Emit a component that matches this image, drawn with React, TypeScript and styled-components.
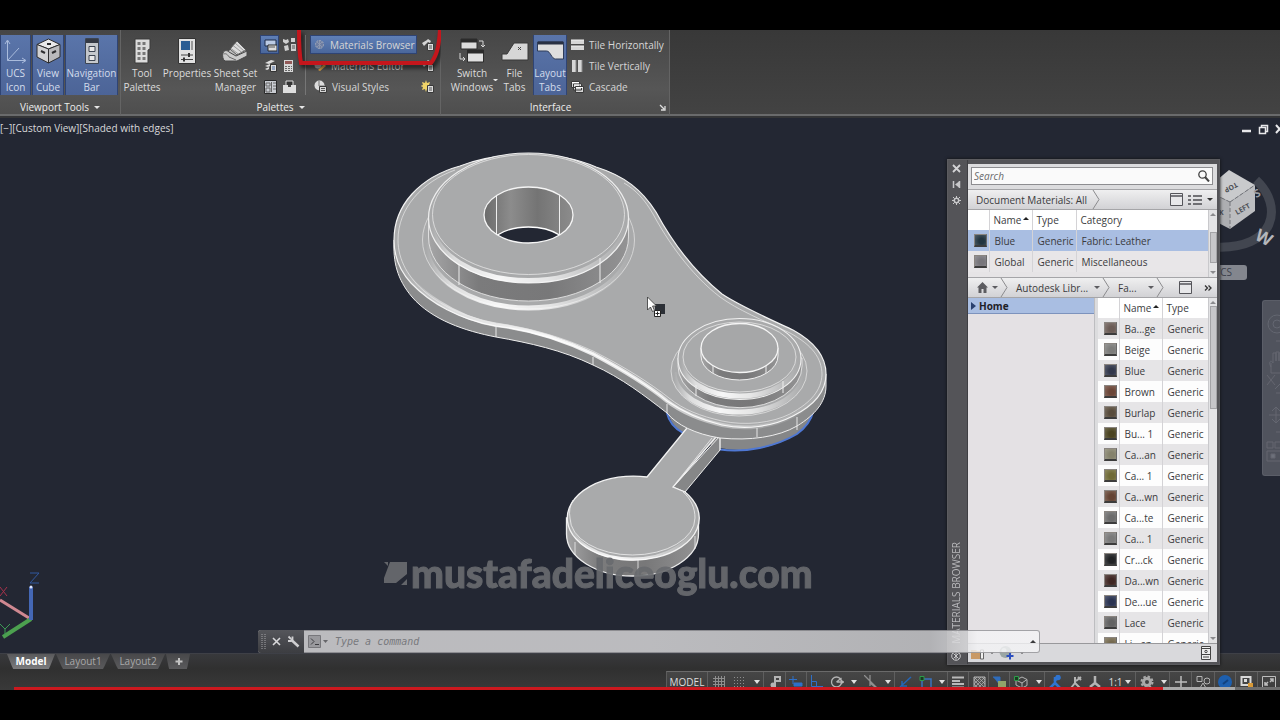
import React from "react";
import styled, { createGlobalStyle, css } from "styled-components";

const ui = `"Open Sans", "Noto Sans", sans-serif`;

const GlobalStyle = createGlobalStyle`
  * { box-sizing: border-box; }
  body { margin: 0; background: #000; font: 10px/14px ${ui}; color: #d6d6d6; }
  button, input { font: inherit; color: inherit; margin: 0; padding: 0; border: 0; background: none; }
  svg { display: block; flex: none; }
`;

/* ---------- shell ---------- */

const Page = styled.div`
  display: flex;
  flex-direction: column;
  min-height: 100vh;
  padding: 30px 0;
  background: #000;
  overflow: hidden;
`;

const Ribbon = styled.header`
  display: flex;
  height: 88px;
  position: relative;
  z-index: 3;
  background: linear-gradient(#383838, #434343);
  border-bottom: 2px solid #343537;
  box-shadow: inset 0 -2px 0 #6a6b6c;
`;

const Panel = styled.section<{ $w: number }>`
  display: flex;
  flex-direction: column;
  width: ${(p) => p.$w}px;
  flex: none;
  position: relative;
  background: linear-gradient(#464646, #565656 70%, #4e4e4e);
  border-right: 1px solid #646464;
  border-bottom: 2px solid #6a6b6c;
`;

const PanelBody = styled.div`
  display: flex;
  height: 67px;
  padding-top: 4px;
`;

const PanelTitle = styled.button<{ $launcher?: boolean }>`
  display: flex;
  flex: 1;
  align-items: center;
  justify-content: center;
  gap: 5px;
  position: relative;
  padding-top: 3px;
  padding-right: ${(p) => (p.$launcher ? 9 : 0)}px;
  color: #ececec;
`;

const Launcher = styled.span`
  position: absolute;
  right: 3px;
  top: 7px;
`;

const BigButton = styled.button<{ $w: number; $on?: boolean; $gap?: number }>`
  display: flex;
  flex-direction: column;
  align-items: center;
  flex: none;
  width: ${(p) => p.$w}px;
  height: 60px;
  margin: 1px 0 0 ${(p) => p.$gap ?? 0}px;
  white-space: nowrap;
  border: 1px solid transparent;
  border-width: 0 1px;
  color: #dcdcdc;
  position: relative;
  ${(p) => p.$on && css`
    background: linear-gradient(#5a75aa, #4c6497);
    border-color: #2f4474;
    color: #d3dcec;
  `}
`;

const BigIcon = styled.span`
  display: flex;
  align-items: center;
  justify-content: center;
  height: 31px;
`;

const DropMark = styled.span`
  position: absolute;
  right: -3px;
  bottom: 14px;
`;

const Stack = styled.div<{ $gap?: number }>`
  display: flex;
  flex-direction: column;
  margin-left: ${(p) => p.$gap ?? 0}px;
`;

const SmallButton = styled.button<{ $w?: number; $on?: boolean }>`
  display: flex;
  align-items: center;
  gap: 5px;
  height: 19px;
  margin: 1px 0;
  width: ${(p) => p.$w ?? 20}px;
  padding-left: 3px;
  white-space: nowrap;
  border: 1px solid transparent;
  ${(p) => p.$on && css`
    background: linear-gradient(#5f7fb6, #4a679c);
    border-color: #2f4474;
  `}
`;

const Rule = styled.span`
  width: 1px;
  height: 60px;
  margin: 1px 4px 0 6px;
  background: #767676;
`;

const Highlight = styled.svg`
  position: absolute;
  left: 173px;
  top: 0;
  filter: drop-shadow(2px 3px 2px rgba(0, 0, 0, 0.7));
  pointer-events: none;
`;

/* ---------- drawing area ---------- */

const Viewport = styled.main`
  flex: 1;
  position: relative;
  z-index: 2;
  min-height: 535px;
  background: #232733;
`;

const ViewLabel = styled.div`
  padding: 3px 0 0;
  color: #d8d8da;
`;

const Model = styled.svg`
  position: absolute;
  left: 380px;
  top: 32px;
`;

const Watermark = styled.div`
  position: absolute;
  left: 384px;
  bottom: 60px;
  display: flex;
  align-items: center;
  gap: 4px;
  font: 900 39px/40px Lato, sans-serif;
  -webkit-text-stroke: 1px #696b6f;
  color: #696b6f;
  opacity: 0.92;
`;

const Axis = styled.svg`
  position: absolute;
  left: 0;
  bottom: 8px;
`;

const WindowButtons = styled.div`
  position: absolute;
  right: -2px;
  top: 5px;
  display: flex;
  gap: 6px;
`;

const ViewCube = styled.svg`
  position: absolute;
  right: 0;
  top: 42px;
`;

const Wcs = styled.button`
  position: absolute;
  right: 33px;
  top: 147px;
  width: 42px;
  height: 15px;
  padding-left: 6px;
  text-align: left;
  line-height: 15px;
  border-radius: 3px;
  background: #83868e;
  color: #3d414c;
`;

const NavBar = styled.nav`
  position: absolute;
  right: 0;
  top: 182px;
  width: 18px;
  height: 176px;
  overflow: hidden;
  border-radius: 3px 0 0 3px;
  background: #50535d;
  border: 1px solid #5b5e68;
  border-right: 0;
`;

const CommandLine = styled.form`
  position: absolute;
  left: 258px;
  right: 240px;
  bottom: 0;
  height: 23px;
  z-index: 3;
  display: flex;
  align-items: center;
  border-radius: 3px;
  overflow: hidden;
  box-shadow: inset 0 0 0 1px rgba(110, 110, 115, 0.6);
  background: linear-gradient(90deg, rgba(190, 190, 193, 0.98) 50%, rgba(193, 193, 195, 0.9) 86%, rgba(244, 244, 246, 0.8) 92%);
`;

const CommandGrip = styled.div`
  display: flex;
  align-items: center;
  justify-content: space-between;
  width: 46px;
  height: 23px;
  padding: 0 4px 0 3px;
  background: linear-gradient(#55565b, #3c3d41);
`;

const CommandMenu = styled.svg`
  margin-left: 4px;
`;

const CommandInput = styled.input`
  flex: 1;
  min-width: 0;
  height: 23px;
  margin-left: 1px;
  font: italic 10px/23px "DejaVu Sans Mono", monospace;
  outline: 0;
  &::placeholder { color: #78797d; opacity: 1; }
`;

const Expand = styled.button`
  padding: 4px 4px;
`;

/* ---------- materials browser ---------- */

const Browser = styled.aside`
  position: absolute;
  right: 60px;
  top: 41px;
  bottom: -12px;
  width: 273px;
  display: flex;
  z-index: 2;
  background: #545458;
  border: 1px solid #5c5c60;
  box-shadow: 0 0 3px #111;
`;

const BrowserSide = styled.div`
  width: 20px;
  flex: none;
  display: flex;
  flex-direction: column;
  align-items: center;
  padding: 4px 3px 3px 0;
  gap: 7px;
  border-right: 1px solid #3f3f43;
`;

const SideTitle = styled.h2`
  margin: auto 0 0;
  font: 10px/14px ${ui};
  color: #b9b9bc;
  writing-mode: vertical-rl;
  transform: rotate(180deg);
`;

const BrowserMain = styled.div`
  flex: 1;
  min-width: 0;
  margin: 4px 2px 2px 0;
  display: flex;
  flex-direction: column;
  background: #dcdcde;
  color: #3b3b3d;
`;

const SearchBox = styled.label`
  display: flex;
  align-items: center;
  margin: 3px 4px 4px 3px;
  height: 18px;
  padding: 0 2px;
  background: #fafafa;
  border: 1px solid #8d8d90;
  input { flex: 1; min-width: 0; font-style: italic; outline: 0; }
  input::placeholder { color: #6a6a6c; opacity: 1; }
`;

const Crumbs = styled.div`
  display: flex;
  align-items: center;
  flex: none;
  height: 21px;
  background: linear-gradient(#efeff0, #d2d2d5);
  border: 1px solid #a5a5a8;
  border-width: 1px 0;
`;

const Crumb = styled.button<{ $w: number; $pad: number }>`
  display: flex;
  align-items: center;
  justify-content: space-between;
  width: ${(p) => p.$w}px;
  padding: 0 2px 0 ${(p) => p.$pad}px;
  white-space: nowrap;
`;

const CrumbTools = styled.div`
  display: flex;
  align-items: center;
  gap: 5px;
  margin-left: auto;
  padding-right: 4px;
`;

const WideGap = styled.span`
  width: 1px;
`;

const DocArea = styled.div`
  display: flex;
  flex: none;
  height: 67px;
  background: #e6e4e6;
`;

const Grid = styled.table<{ $head: number }>`
  flex: 1;
  min-width: 0;
  align-self: flex-start;
  table-layout: fixed;
  border-collapse: collapse;
  th, td {
    height: 21px;
    padding: 0 0 0 5px;
    text-align: left;
    font-weight: 400;
    white-space: nowrap;
    overflow: hidden;
    border-left: 1px solid #d4d3d6;
  }
  th { height: ${(p) => p.$head}px; padding-left: 4px; background: #fff; }
  th svg { display: inline-block; vertical-align: 4px; margin-left: -1px; }
  th:first-child, td:first-child { border-left: 0; padding-left: 6px; }
`;

const Row = styled.tr<{ $tone: string }>`
  background: ${(p) => p.$tone};
`;

const Swatch = styled.span<{ $c: string }>`
  display: block;
  width: 13px;
  height: 13px;
  border: 1px solid #8a8580;
  border-right-color: #6a6a6a;
  border-bottom: 2px solid #3c3c3c;
  background: radial-gradient(circle at 60% 60%, ${(p) => p.$c} 30%, rgba(255, 255, 255, 0.22)), ${(p) => p.$c};
`;

const Scroll = styled.div`
  display: flex;
  flex-direction: column;
  align-items: center;
  justify-content: space-between;
  flex: none;
  width: 9px;
  padding: 3px 0;
  background: #e3e3e5;
  border-left: 1px solid #c9c9cc;
`;

const Thumb = styled.span<{ $top: number; $h: number }>`
  width: 7px;
  height: ${(p) => p.$h}px;
  margin-top: ${(p) => p.$top}px;
  margin-bottom: auto;
  background: #c6c6c9;
  border: 1px solid #a3a3a6;
`;

const LibArea = styled.div`
  display: flex;
  flex: 1;
  min-height: 0;
  overflow: hidden;
`;

const Tree = styled.div`
  width: 127px;
  flex: none;
  background: #e4e1e4;
  border-right: 1px solid #bdbdc0;
`;

const TreeItem = styled.button`
  display: flex;
  align-items: center;
  gap: 3px;
  width: 100%;
  height: 16px;
  padding-left: 3px;
  font-weight: 700;
  font-size: 10px;
  color: #1f2126;
  background: #a9bee2;
  border-bottom: 1px solid #7d93bd;
`;

const LibList = styled.div`
  flex: 1;
  min-width: 0;
  margin-left: 3px;
  display: flex;
`;

const BrowserFoot = styled.div`
  display: flex;
  align-items: center;
  flex: none;
  height: 19px;
  padding: 0 6px 0 3px;
  gap: 5px;
  background: #d9d9dc;
  border-top: 1px solid #98989b;
  > :last-child { margin-left: auto; }
`;

/* ---------- footer ---------- */

const Footer = styled.footer`
  position: relative;
  display: flex;
  justify-content: space-between;
  height: 37px;
  overflow: hidden;
  background: linear-gradient(#38393c, #303030 40%, #393939);
  border-top: 1px solid #3e4047;
`;

const Tabs = styled.div`
  display: flex;
  gap: 1px;
  padding-left: 7px;
  height: 16px;
`;

const Tab = styled.button<{ $w: number; $on?: boolean }>`
  width: ${(p) => p.$w}px;
  height: 15px;
  line-height: 15px;
  color: ${(p) => (p.$on ? "#fff" : "#a9a9a9")};
  font-weight: ${(p) => (p.$on ? 700 : 400)};
  background: ${(p) => (p.$on ? "linear-gradient(#5a5a5c, #7b7b7d)" : "linear-gradient(#48484a, #5a5a5c)")};
  clip-path: polygon(0 0, 100% 0, 90% 80%, 87% 100%, 13% 100%, 10% 80%);
`;

const StatusBar = styled.div`
  display: flex;
  align-self: flex-end;
  height: 19px;
  background: linear-gradient(#464646, #3d3d3d);
  border-top: 1px solid #6a6a6a;
  border-left: 1px solid #5c5c5c;
`;

const StatusButton = styled.button<{ $w: number; $sep?: boolean }>`
  display: flex;
  justify-content: center;
  width: ${(p) => p.$w}px;
  height: 20px;
  padding-top: 3px;
  white-space: nowrap;
  color: #dcdcdc;
  border-right: 1px solid ${(p) => (p.$sep ? "#5f5f5f" : "transparent")};
`;

const Progress = styled.div`
  position: absolute;
  left: 14px;
  right: 0;
  bottom: 0;
  height: 3px;
  display: flex;
`;

const Segment = styled.span<{ $grow: number; $c: string }>`
  flex: ${(p) => p.$grow} 0 0;
  background: ${(p) => p.$c};
`;

/* ---------- icons ---------- */

const Caret = ({ c = "#e6e6e6", w = 8 }: { c?: string; w?: number }) => (
  <svg width={w} height={w / 2} viewBox="0 0 8 4"><path d="M0 0h8L4 4z" fill={c} /></svg>
);
const UpCaret = ({ c = "#222", w = 6 }: { c?: string; w?: number }) => (
  <svg width={w} height={w / 2} viewBox="0 0 8 4"><path d="M0 4h8L4 0z" fill={c} /></svg>
);
const Chevron = () => (
  <svg width="8" height="19" viewBox="0 0 8 19"><path d="M1 0l6 9.500-6 9.500" fill="none" stroke="#8b8b8e" /></svg>
);
const PanelIcon = () => (
  <svg width="13" height="13" viewBox="0 0 13 13"><path d="M.5.5h12v12H.5z" fill="#e8e8ea" stroke="#55555a" /><path d="M.5 3h12" stroke="#55555a" strokeWidth="1.500" /></svg>
);

const UcsIcon = () => (
  <svg width="24" height="26" viewBox="0 0 24 26" fill="none" stroke="#a9bbdc"><path d="M3.500 3v19.500H21M3.500 22.500L15 10" /><path d="M1 6l2.500-4L6 6M18 20l4 2.500-4 2.500" /></svg>
);
const CubeIcon = () => (
  <svg width="25" height="26" viewBox="0 0 25 26" stroke="#2c2c2e"><path d="M1 6.500L12.500 1 24 6.500 12.500 11z" fill="#e9e9ea" /><path d="M1 6.500L12.500 11v14L1 19z" fill="#d0d0d2" /><path d="M24 6.500L12.500 11v14L24 19z" fill="#b9b9bc" /><path d="M5 13l4 2M16 15l4-2M11 6h4" strokeWidth="2" /></svg>
);
const NavIcon = () => (
  <svg width="14" height="26" viewBox="0 0 14 26"><path d="M.5.500h13v25H.5z" fill="#c5c8cc" stroke="#3d4552" /><path d="M1 1h12v4H1z" fill="#353a44" /><path d="M4 8.500h6v5H4zM4 17.500h6v5H4z" fill="#e8e8e8" stroke="#3d4552" /></svg>
);
const ToolPalettesIcon = () => (
  <svg width="17" height="26" viewBox="0 0 17 26"><path d="M1 1h15v10l-2 1v13H1z" fill="#dcdcdc" stroke="#3a3a3a" /><path d="M3.500 4h3v3h-3zM8.500 4h3v3h-3zM3.500 9h3v3h-3zM8.500 9h3v3h-3zM3.500 14h3v3h-3zM8.500 14h3v3h-3zM3.500 19h3v3h-3zM8.500 19h3v3h-3z" fill="#777" /></svg>
);
const PropertiesIcon = () => (
  <svg width="18" height="26" viewBox="0 0 18 26"><path d="M.5.500h17v25H.5z" fill="#e1e1e1" stroke="#333" /><path d="M3 3h9v9H3z" fill="#2b5d93" /><path d="M13 3h2v9h-2z" fill="#999" /><path d="M3 17h12M3 21.500h12" stroke="#444" /><path d="M10 15h2v4h-2zM5 19.500h2v4H5z" fill="#333" /></svg>
);
const SheetSetIcon = () => (
  <svg width="27" height="22" viewBox="0 0 27 22" strokeLinejoin="round">
    <path d="M3 15L15 1l10 10v3l-13 6z" fill="#bdbdbd" stroke="#484848" />
    <path d="M8 9l7-8 9 9-9 5z" fill="#dcdcdc" stroke="#585858" />
    <path d="M11 5.500l9 7M9 8.500l8 6M13 3l9 8" stroke="#8a8a8a" strokeWidth=".8" />
    <path d="M1 13c1-3 4-3 6-1l7 4 11-5v5l-10 5H3c-2-1-3-5-2-8z" fill="#cccccc" stroke="#484848" />
    <path d="M2 14c2-1 4 1 5 3l7 3" stroke="#6a6a6a" fill="none" />
  </svg>
);
const SwitchIcon = () => (
  <svg width="27" height="26" viewBox="0 0 27 26"><path d="M2 1h16v10H2z" fill="#dcdcdc" stroke="#2d2d2d" /><path d="M2 1h16v3.500H2z" fill="#2b2b2b" /><path d="M8.500 12h16v12h-16z" fill="#e0e0e0" stroke="#2d2d2d" /><path d="M8.500 12h16v3.500h-16z" fill="#2b2b2b" /><path d="M20 3h4v6M22 7l2 2 2-2M1 15v6h5M4 19l2 2-2 2" fill="none" stroke="#d8d8d8" /></svg>
);
const FileTabIcon = () => (
  <svg width="28" height="20" viewBox="0 0 28 20"><path d="M1 19v-6h5l7-11h14v17z" fill="#d6d6d6" stroke="#383838" /><path d="M17 6l3 3M20 6l-3 3" stroke="#444" /></svg>
);
const LayoutTabIcon = () => (
  <svg width="27" height="22" viewBox="0 0 27 22"><path d="M.5 2h26v17h-8c-4 0-5-8-9-8h-9z" fill="#dedede" stroke="#2f3c58" /><path d="M1 1.500h25v3H1z" fill="#293143" /></svg>
);

const TileH = () => <svg width="13" height="12" viewBox="0 0 13 12"><path d="M0 1h13v4H0zM0 7h13v4H0z" fill="#d6d6d6" /><path d="M0 1h13M0 7h13" stroke="#efefef" /></svg>;
const TileV = () => <svg width="13" height="12" viewBox="0 0 13 12"><path d="M1 0h4v12H1zM7 0h4v12H7z" fill="#d6d6d6" /><path d="M5 0v12M11 0v12" stroke="#8a8a8a" /></svg>;
const CascadeIcon = () => <svg width="13" height="12" viewBox="0 0 13 12" fill="#d6d6d6" stroke="#3a3a3a"><path d="M.5.500h8v6h-8zM2.500 3h8v6h-8zM4.500 5.500h8v6h-8z" /><path d="M1 1.500h7M3 4h7M5 6.500h7" stroke="#fff" /></svg>;

const Sheet = () => <svg width="13" height="14" viewBox="0 0 13 14"><path d="M1 2h11v6H1z" fill="#bccbe4" stroke="#1f2d49" /><path d="M4 7h9v6H4z" fill="#dcdcdc" stroke="#2a2a2a" /><path d="M5 9h6" stroke="#555" /></svg>;
const Blocks = () => <svg width="13" height="13" viewBox="0 0 13 13" fill="#cfcfcf"><path d="M0 1l3 1 2-1 1 3-3 2-3-2zM8 0h4v4H8zM1 8l4-1 1 5-4 1zM8 6h5v7H8z" /><path d="M9 8h3M9 10h3" stroke="#555" /></svg>;
const Layers = () => <svg width="13" height="13" viewBox="0 0 13 13"><path d="M1 4l6-3 4 1-6 3zM1 7l5-2v2l-2 1zM1 10l4-2v2l-2 1z" fill="#dedede" /><path d="M6.500 5.500h6v7h-6z" fill="#dcdcdc" stroke="#333" /><path d="M8 8h3M8 10h3" stroke="#4a6ca5" /></svg>;
const Calc = () => <svg width="11" height="13" viewBox="0 0 11 13"><path d="M1 1h9v12H1z" fill="#d8d8d8" /><path d="M2 2h7v3H2z" fill="#935a58" /><path d="M2 7.500h7M2 9.500h7M2 11.500h7" stroke="#666" strokeDasharray="2 1" /></svg>;
const Markup = () => <svg width="13" height="14" viewBox="0 0 13 14"><path d="M.5.500h12v13H.5z" fill="#c9ccd2" stroke="#2a2a2a" /><path d="M2 3h4v3H2zM2 8h4v4H2zM7.500 2v10M9 3h3M9 6h3M9 9h3" stroke="#666" fill="none" /></svg>;
const Tray = () => <svg width="13" height="13" viewBox="0 0 13 13"><path d="M3 1h7v5H3z" fill="#333" stroke="#ddd" /><path d="M0 5h13v8H0z" fill="#dedede" /><path d="M5 5h3v2H5z" fill="#444" /></svg>;
const Sphere = () => <svg width="11" height="11" viewBox="0 0 11 11"><circle cx="5.500" cy="5.500" r="4" fill="#6e7ea2" stroke="#a5adbd" strokeDasharray="2 1" /><path d="M3 3l5 5M8 3L3 8M5.500 1v9" stroke="#98a1b4" strokeWidth=".7" /></svg>;
const Pencil = () => <svg width="12" height="12" viewBox="0 0 12 12"><circle cx="4" cy="5" r="3.500" fill="#aaa" /><path d="M4 10l6-6 2 2-6 5z" fill="#d8a046" /></svg>;
const Globe = () => <svg width="13" height="13" viewBox="0 0 13 13"><circle cx="5.500" cy="5.500" r="5" fill="#dcdcdc" /><path d="M5 1v5h5" stroke="#777" fill="none" /><path d="M5.500 6.500h7v6h-7z" fill="#d6d6d6" stroke="#3a3a3a" /><path d="M7 8.500h4M7 10.500h4" stroke="#555" /></svg>;
const Lamp = ({ sun }: { sun?: boolean }) => (
  <svg width="14" height="13" viewBox="0 0 14 13">
    {sun ? <path d="M5 0l1 3 3-1-1 3 3 1-3 1 1 3-3-1-1 3-1-3-3 1 1-3-3-1 3-1-1-3 3 1z" fill="#f1d468" /> : <path d="M1 5l5-3 1-1 3 2-1 2-2-1-4 4z" fill="#d4d4d4" />}
    <path d="M6.500 5.500h6v7h-6z" fill="#dcdcdc" stroke="#3a3a3a" /><path d="M8 8h3M8 10h3" stroke="#555" />
  </svg>
);

const statusGlyphs: Record<string, React.ReactNode> = {
  grid: <path d="M3.500 1v13M6.500 1v13M9.500 1v13M12.500 1v13M1 3.500h12M1 6.500h12M1 9.500h12" stroke="#8e8e8e" />,
  dots: <path d="M1 2.500h12M1 5.500h12M1 8.500h12M1 11.500h12" stroke="#8f8f8f" strokeDasharray="1 2" />,
  snap: <g><path d="M7 12V2h5v4H8" fill="none" stroke="#b4b4b4" strokeWidth="2" /><circle cx="5" cy="10" r="2.500" fill="#b4b4b4" /></g>,
  infer: <path d="M4 1v8M0 4.500h8M5 8h8v3H5z" stroke="#2f70c8" fill="#2f70c8" />,
  ortho: <path d="M2.500 0v11.500H14M2.500 6.500h5v5" fill="none" stroke="#2f70c8" />,
  polar: <g fill="none" stroke="#b4b4b4" strokeWidth="1.300"><circle cx="6.500" cy="7" r="5" /><path d="M6.500 7H14M6.500 7l5-4M11 5l2 2-2 2" /></g>,
  iso: <path d="M0 0l13 13M6 0v11M6 8l5 4" stroke="#8f8f8f" strokeWidth="1.300" fill="none" />,
  track: <path d="M13 2L2 12M4 6v5h5" stroke="#2565b5" strokeWidth="1.500" fill="none" />,
  osnap: <g><path d="M3 12V4h9v8" fill="none" stroke="#3a72bd" strokeWidth="1.500" /><path d="M1 1.500h4v4H1z" fill="#183a20" stroke="#2d9b4a" /></g>,
  lines: <path d="M1 2.500h12M1 6h8M1 9h12M1 12.500h12" stroke="#b9b9b9" strokeWidth="2" />,
  hatch: <g stroke="#b5b5b5"><path d="M2 2h11v11H2z" fill="#555" /><path d="M2 5l8 8M2 9l4 4M2 2l11 11M6 2l7 7M10 2l3 3M5 2L2 5M9 2L2 9M13 2L2 13M13 6l-7 7" strokeWidth=".7" /></g>,
  cycle: <g><path d="M1 2h7v4H5l3 4" stroke="#2f6dbc" fill="#2f6dbc" /><path d="M6 6h8v7H6z" fill="#8fa26a" /></g>,
  cube: <g fill="none" stroke="#b4b4b4"><path d="M2 5l6-3 5 2.500v6L8 13l-6-3zM2 5l6 3 5-3.500M8 8v5" /><path d="M.5 1.500h4v4h-4z" stroke="#2d9b4a" fill="#193d21" /></g>,
  annoBlue: <g stroke="#2f74d0" strokeWidth="2.500" fill="none"><path d="M7 2v6l-5 5M7 8l5 5M6 6l6-4" /><circle cx="10" cy="2.500" r="1.500" /></g>,
  anno2: <g stroke="#b4b4b4" strokeWidth="2" fill="none"><path d="M6 2v6l-4 5M6 8l5 5M7 6l5-4M9 2l3 3" /></g>,
  anno3: <path d="M7 1v7l-5 4M7 8l5 4" stroke="#b4b4b4" strokeWidth="2.500" fill="none" />,
  gear: <g><circle cx="7" cy="7" r="3.500" fill="none" stroke="#a9a9a9" strokeWidth="3" /><circle cx="7" cy="7" r="5.500" fill="none" stroke="#a9a9a9" strokeWidth="2" strokeDasharray="2.500 1.800" /></g>,
  plus: <path d="M7 1v12M1 7h12" stroke="#bdbdbd" strokeWidth="1.500" />,
  shapes: <g fill="none" stroke="#b4b4b4"><path d="M1 1.500h5v5H1zM4 13l3-5 3 5z" /><circle cx="11" cy="6" r="3" /></g>,
  ring: <g><circle cx="7" cy="7" r="7" fill="#1d5fae" /><path d="M5 9l5-4" stroke="#12427f" strokeWidth="2" /></g>,
  lock: <g><path d="M1.500 2h9v8h-9z" fill="#444" stroke="#d8d8d8" strokeWidth="2" /><path d="M4 4h3v3H4z" fill="#ddd" /><path d="M8 8h5v5H8z" fill="#d99a37" /></g>,
  full: <g fill="none" stroke="#bdbdbd"><path d="M.5 1.500h13v11H.5z" /><path d="M3 10l3-3M3 7v3h3M11 4L8 7M8 4h3v3" strokeWidth="1.500" /></g>,
};

const StatusIcon = ({ name }: { name: string }) => <svg width="14" height="14" viewBox="0 0 14 14">{statusGlyphs[name]}</svg>;

const statusItems: [string, number, boolean?][] = [
  ["grid", 22], ["dots", 21], ["caret", 13, true], ["snap", 22, true], ["infer", 21, true], ["ortho", 19], ["polar", 22], ["caret", 13],
  ["iso", 20], ["caret", 14, true], ["track", 20], ["osnap", 22], ["caret", 11, true], ["lines", 21, true], ["hatch", 20, true], ["cycle", 21, true],
  ["cube", 23], ["caret", 12, true], ["annoBlue", 21], ["anno2", 20], ["anno3", 19], ["scale", 31, true], ["gear", 22], ["caret", 12, true],
  ["plus", 22, true], ["shapes", 23, true], ["ring", 21, true], ["lock", 22, true], ["full", 22],
];

/* ---------- data ---------- */

const library = [
  ["Ba...ge", "#6b5c56"], ["Beige", "#7d7d7b"], ["Blue", "#31374a"], ["Brown", "#6b4638"], ["Burlap", "#584c3c"],
  ["Bu... 1", "#4b4422"], ["Ca...an", "#85826c"], ["Ca... 1", "#706b37"], ["Ca...wn", "#644434"], ["Ca...te", "#6c6c6c"],
  ["Ca... 1", "#7a7a7a"], ["Cr...ck", "#202224"], ["Da...wn", "#3f2723"], ["De...ue", "#2a3350"], ["Lace", "#626262"], ["Li...en", "#756a50"],
];

/* ---------- pieces ---------- */

const PartDrawing = () => (
  <Model width="460" height="440" viewBox="380 150 460 440" fill="none" role="img" aria-label="3D part">
    <defs>
      <linearGradient id="side" x1="0" x2="1"><stop offset="0" stopColor="#a5a5a6" /><stop offset=".25" stopColor="#7b7b7c" /><stop offset=".6" stopColor="#787879" /><stop offset="1" stopColor="#939394" /></linearGradient>
      <linearGradient id="bore" x1="0" x2="1"><stop offset="0" stopColor="#6b6b6b" /><stop offset=".3" stopColor="#8c8c8c" /><stop offset=".6" stopColor="#747474" /><stop offset="1" stopColor="#8c8c8c" /></linearGradient>
      <linearGradient id="fade" x1="0" x2="1"><stop offset="0" stopColor="#fff" stopOpacity="0" /><stop offset=".12" stopColor="#fff" stopOpacity=".6" /><stop offset=".35" stopColor="#fff" stopOpacity=".9" /><stop offset=".6" stopColor="#fff" stopOpacity=".7" /><stop offset="1" stopColor="#fff" stopOpacity="0" /></linearGradient>
      <clipPath id="hole"><ellipse cx="528.500" cy="215" rx="44.500" ry="28" /></clipPath>
    </defs>

    {/* lower coloured base */}
    <path d="M667 410C670 422 676 430 688 436L720 448C745 453 775 448 797 434C805 428 811 421 814 408L740 400z" fill="#858687" />
    <path d="M667 413C669 422 674 428 683 433M720 449.500C745 453 775 447 797 434C805 428 811 421 813 412" stroke="#4f78d4" strokeWidth="2" />

    {/* tag disc and arm */}
    <path d="M720 436V450L685 492 673 487z" fill="#868788" stroke="#eee" />
    <path d="M566.500 518V534A66 42 0 0 0 698.500 534V518z" fill="url(#side)" stroke="#ececec" strokeWidth="1.300" />
    <path d="M647 477A66 42 0 1 0 685 492L673 487 716 437 687 428z" fill="#a9aaab" />
    <path d="M716 437L673 487 685 492A66 42 0 1 1 647 477L687 428" stroke="#f2f2f2" strokeWidth="1.300" />
    <path d="M570 520A62.500 39 0 0 0 695 520" stroke="url(#fade)" strokeWidth="3" />
    <path d="M573 500A62.500 40 0 0 0 570 518A62.500 37 0 0 0 695 518C695 508 691 499 683 492M712 438L676 483M575 542V555M638 560V576M695 536V549M720 438V450" stroke="#efefef" strokeWidth=".8" />

    {/* plate side wall */}
    <path d="M394 240C393 262 397 279 412 297C432 320 465 331 496 337C530 343 562 350 593 365C622 378 645 396 667 413C677 425 695 434 720 438C750 441 778 437 797 426C815 415 826 402 826 386V374L780 370 660 330 450 220z" fill="#8b8c8d" stroke="#ededed" />
    {/* plate top */}
    <path d="M394 240C394 205 420 177 460 166C500 150 560 151 596 167C625 176 642 190 656 212C670 238 690 268 722 294C740 306 765 317 793 330C813 341 826 356 826 374C826 390 815 405 793 416C772 427 745 430 722 425C696 419 680 410 667 401C650 387 625 371 593 354C562 340 530 330 496 326C460 320 430 303 411 283C399 270 394 256 394 240z" fill="#a9aaab" stroke="#f3f3f3" strokeWidth="1.200" />
    <path d="M402 267C415 290 455 318 496 325C530 329 562 339 593 354C625 371 650 387 667 401C680 411 696 419 722 425C745 430 772 427 793 416C805 409 813 402 818 395" stroke="url(#fade)" strokeWidth="4" />
    <path d="M398 240C398 208 422 182 455 170M398 240C398 280 440 313 496 323C530 328 562 337 593 351C625 367 650 383 669 398C684 410 700 416 722 421C745 426 772 423 790 414C812 402 821 390 822 375C822 358 812 345 790 333C762 320 738 310 720 297C690 274 667 240 653 214C645 200 636 190 624 183" stroke="#e8e8e8" strokeWidth=".7" />
    <path d="M496 327V337M593 357V365M667 404V413M757 428V437M797 417V430" stroke="#f0f0f0" strokeWidth=".9" />

    {/* large ring */}
    <ellipse cx="528.500" cy="240" rx="106" ry="69" fill="#a9aaab" stroke="#dedede" strokeWidth=".8" />
    <path d="M426 243A102.500 65 0 0 0 631 243" stroke="url(#fade)" strokeWidth="5" />
    <path d="M428.500 217V237A100 64 0 0 0 628.500 237V217z" fill="url(#side)" stroke="#e4e4e4" strokeWidth=".9" />
    <ellipse cx="528.500" cy="218" rx="100" ry="65" fill="#a9aaab" stroke="#eee" strokeWidth="1.200" />
    <path d="M431 220A97.500 60.500 0 0 0 626 220" stroke="url(#fade)" strokeWidth="5" />
    <ellipse cx="528.500" cy="214.500" rx="96" ry="60" fill="#a9aaab" stroke="#e6e6e6" strokeWidth=".8" />
    <path d="M459 265V285M600 258V283" stroke="#eee" />
    <ellipse cx="528.500" cy="215" rx="44.500" ry="28" fill="url(#bore)" />
    <g clipPath="url(#hole)">
      <ellipse cx="528.500" cy="255" rx="44.500" ry="28" fill="#232733" stroke="#fff" strokeWidth="1.300" />
      <path d="M496.500 190V235M559.500 190V235" stroke="#eee" />
    </g>
    <ellipse cx="528.500" cy="215" rx="44.500" ry="28" stroke="#f5f5f5" strokeWidth="1.300" />

    {/* small ring */}
    <ellipse cx="739" cy="371" rx="68" ry="45" fill="#a9aaab" stroke="#e2e2e2" strokeWidth=".8" />
    <path d="M674 372A65 40 0 0 0 804 372" stroke="url(#fade)" strokeWidth="5" />
    <path d="M678 358V366A61 41 0 0 0 802 366V358z" fill="url(#side)" stroke="#e6e6e6" strokeWidth=".9" />
    <ellipse cx="739.500" cy="359" rx="61.500" ry="40.500" fill="#a9aaab" stroke="#f0f0f0" strokeWidth="1.100" />
    <path d="M681 360A58.500 36 0 0 0 798 360" stroke="url(#fade)" strokeWidth="5" />
    <ellipse cx="739.500" cy="357" rx="56.500" ry="35" fill="#a9aaab" stroke="#e6e6e6" strokeWidth=".8" />
    <path d="M696 385V396M783 381V393" stroke="#eee" />
    <path d="M701 348V356A38.500 24 0 0 0 778 356V348z" fill="url(#side)" stroke="#f0f0f0" />
    <ellipse cx="739.500" cy="348" rx="38.500" ry="24.500" fill="#a6a7a8" stroke="#f5f5f5" strokeWidth="1.300" />
    <path d="M713 366V373M766 366V373" stroke="#eee" />

    {/* drag cursor */}
    <path d="M655 304h10v10h-10z" fill="#2c3036" />
    <path d="M654.500 310.500h6v6h-6z" fill="#fff" stroke="#222" />
    <path d="M657.500 311.500v4M655.500 313.500h4" stroke="#222" />
    <path d="M647.500 297v13l3-3 2 4.500 2-1-2-4.500h4z" fill="#fff" stroke="#333" strokeWidth=".8" />
  </Model>
);

const MaterialsBrowser = () => (
  <Browser aria-label="Materials Browser">
    <BrowserSide>
      <svg width="9" height="9" viewBox="0 0 9 9"><path d="M1 1l7 7M8 1L1 8" stroke="#d3d3d5" strokeWidth="1.800" /></svg>
      <svg width="9" height="9" viewBox="0 0 9 9"><path d="M1.500 1v7M7.500 1v7" stroke="#c8c8ca" strokeWidth="1.500" /><path d="M7 1.500v6L3 4.500z" fill="#c8c8ca" /></svg>
      <svg width="9" height="9" viewBox="0 0 9 9" stroke="#c8c8ca" fill="none"><circle cx="4.500" cy="4.500" r="2.200" strokeWidth="1.500" /><path d="M4.500 0v2M4.500 7v2M0 4.500h2M7 4.500h2M1 1l1.500 1.500M6.500 6.500L8 8M8 1L6.500 2.500M1 8l1.500-1.500" /></svg>
      <SideTitle>MATERIALS BROWSER</SideTitle>
      <svg width="10" height="10" viewBox="0 0 10 10" stroke="#c8c8ca" fill="none"><circle cx="5" cy="5" r="4.300" /><path d="M2.500 2.500l5 5M7.500 2.500l-5 5M5 1.500v7" /></svg>
    </BrowserSide>
    <BrowserMain>
      <SearchBox>
        <input placeholder="Search" aria-label="Search" />
        <svg width="12" height="12" viewBox="0 0 12 12" fill="none" stroke="#444"><circle cx="4.500" cy="4.500" r="3.700" strokeWidth="1.300" /><path d="M7 7l4 4.500" strokeWidth="2" /></svg>
      </SearchBox>
      <Crumbs>
        <Crumb $w={124} $pad={8}>Document Materials: All</Crumb>
        <Chevron />
        <CrumbTools>
          <PanelIcon />
          <svg width="14" height="12" viewBox="0 0 14 12" stroke="#4c4c50"><path d="M0 2h3M5 2h9M0 6h3M5 6h9M0 10h3M5 10h9" strokeWidth="1.500" /></svg>
          <Caret c="#333" w={6} />
        </CrumbTools>
      </Crumbs>
      <DocArea>
        <Grid $head={20}>
          <colgroup><col style={{ width: 21 }} /><col style={{ width: 43 }} /><col style={{ width: 44 }} /><col /></colgroup>
          <thead><tr><th aria-label="Preview" /><th>Name <UpCaret w={6} /></th><th>Type</th><th>Category</th></tr></thead>
          <tbody>
            <Row $tone="#a9bee2"><td><Swatch $c="#22343f" /></td><td>Blue</td><td>Generic</td><td>Fabric: Leather</td></Row>
            <Row $tone="#e8e6e8"><td><Swatch $c="#77757a" /></td><td>Global</td><td>Generic</td><td>Miscellaneous</td></Row>
          </tbody>
        </Grid>
        <Scroll><UpCaret c="#8b8b8e" w={6} /><Thumb $top={16} $h={31} /><Caret c="#8b8b8e" w={6} /></Scroll>
      </DocArea>
      <Crumbs>
        <Crumb $w={32} $pad={9} aria-label="Home">
          <svg width="11" height="11" viewBox="0 0 11 11"><path d="M5.500 0L11 5.500H9.500V11h-3V7h-2v4h-3V5.500H0z" fill="#5c5c60" /></svg>
          <Caret c="#5c5c60" w={6} />
        </Crumb>
        <Chevron />
        <Crumb $w={94} $pad={8}>Autodesk Libr... <Caret c="#5c5c60" w={6} /></Crumb>
        <Chevron />
        <Crumb $w={46} $pad={8}>Fa... <Caret c="#5c5c60" w={6} /></Crumb>
        <Chevron />
        <CrumbTools>
          <PanelIcon />
          <WideGap />
          <svg width="10" height="8" viewBox="0 0 10 8" fill="none" stroke="#333" strokeWidth="1.300"><path d="M2 1.500L4.500 4 2 6.500M5.500 1.500L8 4 5.500 6.500" /></svg>
        </CrumbTools>
      </Crumbs>
      <LibArea>
        <Tree>
          <TreeItem><svg width="5" height="8" viewBox="0 0 5 8"><path d="M0 0l5 4-5 4z" fill="#29406e" /></svg>Home</TreeItem>
        </Tree>
        <LibList>
          <Grid $head={20}>
            <colgroup><col style={{ width: 21 }} /><col style={{ width: 43 }} /><col /></colgroup>
            <thead><tr><th aria-label="Preview" /><th>Name <UpCaret w={6} /></th><th>Type</th></tr></thead>
            <tbody>
              {library.map(([name, color], i) => (
                <Row key={i} $tone={i % 2 ? "#fdfdfd" : "#e6e5e7"}><td><Swatch $c={color} /></td><td>{name}</td><td>Generic</td></Row>
              ))}
            </tbody>
          </Grid>
          <Scroll><UpCaret c="#8b8b8e" w={6} /><Thumb $top={2} $h={103} /><Caret c="#8b8b8e" w={6} /></Scroll>
        </LibList>
      </LibArea>
      <BrowserFoot>
        <svg width="14" height="13" viewBox="0 0 14 13"><path d="M0 3h5l1 1h4v8H0z" fill="#c99965" /><path d="M9.500 3h3v9h-3z" fill="#f0f0f0" stroke="#666" /></svg>
        <Caret c="#444" w={4} />
        <svg width="16" height="15" viewBox="0 0 16 15"><circle cx="6.500" cy="6" r="6" fill="#9aa6a4" /><circle cx="5" cy="4.500" r="2.500" fill="#cfd6d4" /><path d="M11 6.500v7M7.500 10h7" stroke="#2c4fc0" strokeWidth="2" /></svg>
        <Caret c="#444" w={4} />
        <svg width="10" height="14" viewBox="0 0 10 14" fill="#eee" stroke="#444"><path d="M.5.500h9v13h-9zM.5 8.500h9M2 11h6M.5 2.500h9" /><circle cx="5" cy="5.500" r="1.200" /></svg>
      </BrowserFoot>
    </BrowserMain>
  </Browser>
);

export default function App() {
  return (
    <Page>
      <GlobalStyle />
      <Ribbon>
        <Panel $w={121}>
          <PanelBody>
            <BigButton $w={31} $on><BigIcon><UcsIcon /></BigIcon><span>UCS</span><span>Icon</span></BigButton>
            <BigButton $w={32} $gap={1} $on><BigIcon><CubeIcon /></BigIcon><span>View</span><span>Cube</span></BigButton>
            <BigButton $w={53} $gap={1} $on><BigIcon><NavIcon /></BigIcon><span>Navigation</span><span>Bar</span></BigButton>
          </PanelBody>
          <PanelTitle>Viewport Tools <Caret w={6} /></PanelTitle>
        </Panel>
        <Panel $w={320}>
          <PanelBody>
            <BigButton $w={42}><BigIcon><ToolPalettesIcon /></BigIcon><span>Tool</span><span>Palettes</span></BigButton>
            <BigButton $w={48}><BigIcon><PropertiesIcon /></BigIcon><span>Properties</span></BigButton>
            <BigButton $w={49}><BigIcon><SheetSetIcon /></BigIcon><span>Sheet Set</span><span>Manager</span></BigButton>
            <Stack>
              <SmallButton aria-label="Command Line" $on $w={19}><Sheet /></SmallButton>
              <SmallButton aria-label="Layers" $w={19}><Layers /></SmallButton>
              <SmallButton aria-label="Markup Sets" $w={19}><Markup /></SmallButton>
            </Stack>
            <Stack>
              <SmallButton aria-label="Design Center"><Blocks /></SmallButton>
              <SmallButton aria-label="Calculator"><Calc /></SmallButton>
              <SmallButton aria-label="Tool Box"><Tray /></SmallButton>
            </Stack>
            <Rule />
            <Stack>
              <SmallButton $on $w={107}><Sphere />Materials Browser</SmallButton>
              <SmallButton $w={107}><Pencil />Materials Editor</SmallButton>
              <SmallButton $w={107}><Globe />Visual Styles</SmallButton>
            </Stack>
            <Stack>
              <SmallButton aria-label="Lights"><Lamp /></SmallButton>
              <SmallButton aria-label="Render Presets"><Lamp /></SmallButton>
              <SmallButton aria-label="Sun Properties"><Lamp sun /></SmallButton>
            </Stack>
          </PanelBody>
          <PanelTitle>Palettes <Caret w={6} /></PanelTitle>
          <Highlight width="150" height="42" viewBox="0 0 150 42" fill="none">
            <path d="M5 0c0 12 0 22 2 33h130c7-9 8-20 9-33" stroke="#c4161c" strokeWidth="4" />
          </Highlight>
        </Panel>
        <Panel $w={229}>
          <PanelBody>
            <BigButton $w={48} $gap={7}><BigIcon><SwitchIcon /></BigIcon><span>Switch</span><span>Windows</span><DropMark><Caret w={5} /></DropMark></BigButton>
            <BigButton $w={37}><BigIcon><FileTabIcon /></BigIcon><span>File</span><span>Tabs</span></BigButton>
            <BigButton $w={34} $on><BigIcon><LayoutTabIcon /></BigIcon><span>Layout</span><span>Tabs</span></BigButton>
            <Stack>
              <SmallButton $w={98}><TileH />Tile Horizontally</SmallButton>
              <SmallButton $w={98}><TileV />Tile Vertically</SmallButton>
              <SmallButton $w={98}><CascadeIcon />Cascade</SmallButton>
            </Stack>
          </PanelBody>
          <PanelTitle $launcher>Interface<Launcher><svg width="7" height="7" viewBox="0 0 7 7"><path d="M1 1l4 4M6 2v4H2" stroke="#ddd" fill="none" strokeWidth="1.300" /></svg></Launcher></PanelTitle>
        </Panel>
      </Ribbon>

      <Viewport>
        <ViewLabel>[−][Custom View][Shaded with edges]</ViewLabel>
        <PartDrawing />
        <Watermark>
          <svg width="23" height="24" viewBox="0 0 23 24" fill="currentColor"><path d="M6 1h17v12L12 22H0v-5zM17 24l6-6v6z" /><path d="M0 1l4 4V1z" /></svg>
          mustafadeliceoglu.com
        </Watermark>
        <Axis width="44" height="76" viewBox="0 569 44 76" fill="none">
          <path d="M0 600L29 618" stroke="#cf8891" strokeWidth="3" />
          <path d="M31 619L3 637" stroke="#4ca04f" strokeWidth="4" />
          <path d="M31 587V620" stroke="#4467b5" strokeWidth="4" />
          <circle cx="31" cy="587" r="1.500" fill="#dbe4ff" />
          <path d="M30 573h9l-9 10h9" stroke="#31589f" /><path d="M0 587l7 9M7 587l-7 9" stroke="#a8324c" /><path d="M0 624l5 5 5-5M5 629v6" stroke="#3c9b55" />
        </Axis>

        <WindowButtons>
          <svg width="40" height="12" viewBox="0 0 40 12" fill="none" stroke="#e8e8ea"><path d="M0 8h9" strokeWidth="2.500" /><path d="M17.500 4.500h6v6h-6zM19.500 4V2.500h6v6H24" strokeWidth="1.500" /><path d="M34 2l7 8M41 2l-7 8" strokeWidth="2" /></svg>
        </WindowButtons>
        <ViewCube width="80" height="110" viewBox="1200 160 80 110" fill="none">
          <path d="M1256 180C1284 206 1276 250 1215 247" stroke="#424650" strokeWidth="9" />
          <path d="M1229 170L1255 185 1230 202 1205 190z" fill="#c9cacc" />
          <path d="M1205 190L1230 202V229L1205 216z" fill="#adaeb1" />
          <path d="M1255 185V211L1230 229V202z" fill="#bcbdc0" />
          <path d="M1230 202V229M1230 202L1255 185M1205 190L1230 202" stroke="#74767b" strokeDasharray="4 2" />
          <g fill="#4d5056" fontFamily="Open Sans, sans-serif" fontWeight="700" fontSize="7">
            <text transform="translate(1236 182) rotate(152)">TOP</text>
            <text transform="translate(1237 215) rotate(-30)">LEFT</text>
            <text x="1219" y="215">K</text>
          </g>
          <g fill="#b4b6bb" fontFamily="Open Sans, sans-serif" fontWeight="700">
            <text transform="translate(1256 198) rotate(-25)" fontSize="11" fill="#9a9da4">S</text>
            <text transform="translate(1254 239) rotate(28)" fontSize="17">W</text>
          </g>
        </ViewCube>
        <Wcs>WCS</Wcs>
        <NavBar aria-label="Navigation bar">
          <svg width="20" height="174" viewBox="0 0 20 174" fill="none" stroke="#646771"><circle cx="14" cy="23" r="9" /><circle cx="14" cy="23" r="4" /><path d="M13 40h4M8 66c-3-5 0-8 2-4V52h3v8-9h3v9-8h4M8 62v10h11M4 74l8 10M12 74L4 84M12 88l6-6M13 92h4M6 114h14M13 106v16M9 110l4-4 4 4M9 118l4 4 4-4M13 131h4M4 141h6v6H4zM12 141h6v6h-6zM4 150h14v10H4z" /><path d="M8 153h4v4H8z" fill="#6d707a" /></svg>
        </NavBar>

        <MaterialsBrowser />

        <CommandLine onSubmit={(e) => e.preventDefault()}>
          <CommandGrip>
            <svg width="5" height="15" viewBox="0 0 5 15" stroke="#a5a5a8" strokeDasharray="1 1"><path d="M1 0v15M4 0v15" /></svg>
            <svg width="9" height="9" viewBox="0 0 9 9"><path d="M1 1l7 7M8 1L1 8" stroke="#d8d8da" strokeWidth="1.600" /></svg>
            <svg width="13" height="13" viewBox="0 0 13 13"><path d="M4 4.500l7.500 7" stroke="#cfcfd1" strokeWidth="2.500" /><path d="M1.500 1.500L4 4M5.500 1.500v3l-1.500 1.500h-3" stroke="#cfcfd1" strokeWidth="1.800" fill="none" /></svg>
          </CommandGrip>
          <CommandMenu width="26" height="13" viewBox="0 0 26 13"><path d="M.5.500h12v12H.5z" fill="#99999d" stroke="#77777b" /><path d="M3 3.500l3 3-3 3M7 9.500h4" stroke="#3c3c40" fill="none" /><path d="M15 5h5l-2.500 3z" fill="#66666a" /></CommandMenu>
          <CommandInput placeholder="Type a command" aria-label="Command" />
          <Expand aria-label="Expand history"><UpCaret c="#3a3a3c" w={6} /></Expand>
        </CommandLine>
      </Viewport>

      <Footer>
        <Tabs>
          <Tab $w={48} $on>Model</Tab>
          <Tab $w={54}>Layout1</Tab>
          <Tab $w={54}>Layout2</Tab>
          <Tab $w={24} aria-label="New layout"><svg width="24" height="15" viewBox="0 0 24 15"><path d="M13 4v7M9.500 7.500h7" stroke="#c2c2c2" strokeWidth="2" /></svg></Tab>
        </Tabs>
        <StatusBar>
          <StatusButton $w={41} $sep>MODEL</StatusButton>
          {statusItems.map(([name, w, sep], i) => (
            <StatusButton key={i} $w={w} $sep={sep} aria-label={name === "scale" ? undefined : name}>
              {name === "caret" ? <svg width="6" height="12" viewBox="0 0 6 12"><path d="M0 5h6L3 9z" fill="#e0e0e0" /></svg>
                : name === "scale" ? <>1:1<svg width="9" height="12" viewBox="0 0 9 12"><path d="M2 5h6L5 9z" fill="#e0e0e0" /></svg></>
                : <StatusIcon name={name} />}
            </StatusButton>
          ))}
        </StatusBar>
        <Progress role="progressbar" aria-label="Playback" aria-valuenow={91}>
          <Segment $grow={1149} $c="#cc181e" />
          <Segment $grow={72} $c="#a9a9a9" />
          <Segment $grow={45} $c="#6e6e6e" />
        </Progress>
      </Footer>
    </Page>
  );
}
